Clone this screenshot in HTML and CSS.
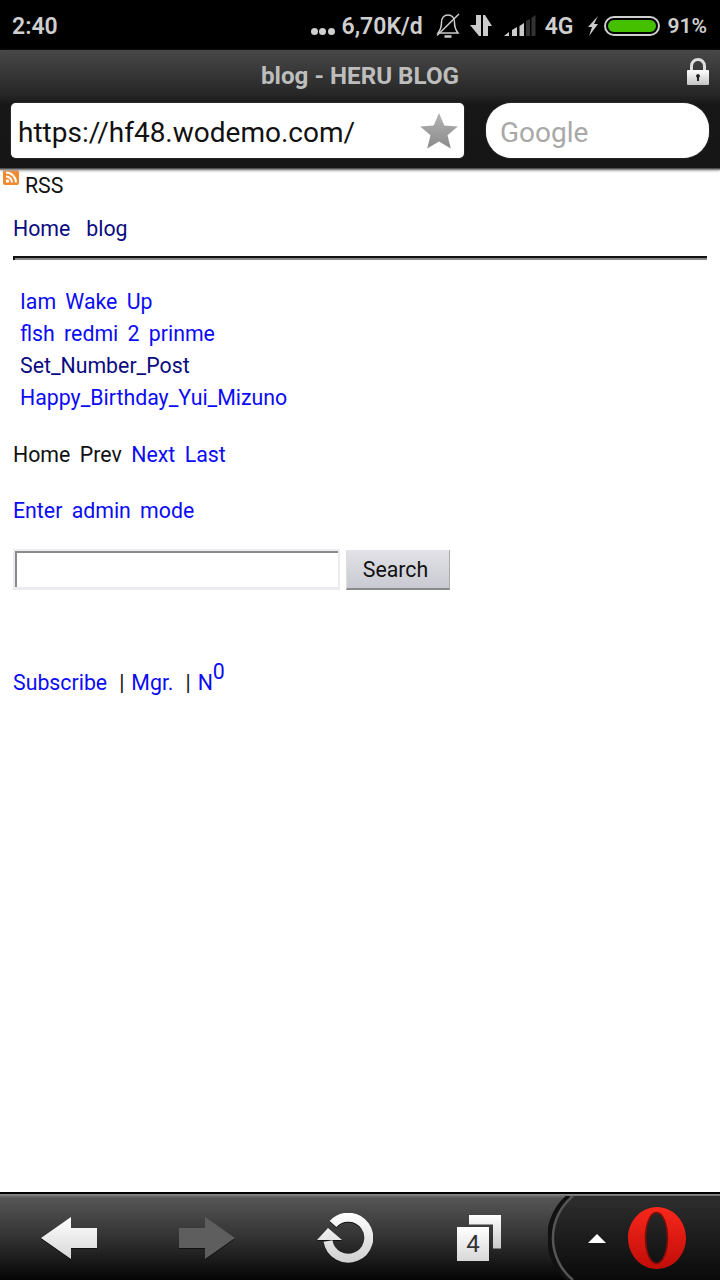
FILE: index.html
```html
<!DOCTYPE html>
<html lang="en">
<head>
    <meta charset="UTF-8">
    <meta name="viewport" content="width=device-width, initial-scale=1.0">
    <title>blog - HERU BLOG</title>
    <link rel="stylesheet" href="styles.css">
</head>
<body>
    <div class="screen">
        <!-- status bar -->
        <div class="status-bar">
            <span class="clock">2:40</span>
            <div class="status-right">
                <span class="dots">
                    <i></i><i></i><i></i>
                </span>
                <span class="speed">6,70K/d</span>
                <svg class="icon-bell" width="24" height="26" viewBox="0 0 24 26">
                    <path d="M12 2C8 2 5.500 5 5.500 9.500c0 5-1.500 8-3.500 10.500h20c-2-2.500-3.500-5.500-3.500-10.500C18.500 5 16 2 12 2z" fill="none" stroke="#ccc" stroke-width="1.500"/>
                    <path d="M8.500 23.500h7" stroke="#ccc" stroke-width="2.500"/>
                    <path d="M1 22.500L23 1" stroke="#ccc" stroke-width="1.500"/>
                </svg>
                <svg class="icon-data" width="23" height="22" viewBox="0 0 23 22">
                    <path d="M6 0h5v21H9L0 10h6z" fill="#ccc"/>
                    <path d="M13 21V0h2l7 11h-4v10z" fill="#ccc"/>
                </svg>
                <svg class="icon-signal" width="32" height="22" viewBox="0 0 32 22">
                    <path d="M0 21l5-4v4z" fill="#ccc"/>
                    <path d="M8 21v-6l5-3v9z" fill="#ccc"/>
                    <path d="M15.500 21V11l4.500-3v13z" fill="#ccc"/>
                    <path d="M22 21V6l4-2v17z" fill="#333"/>
                    <path d="M27.500 21V3l4-3v21z" fill="#333"/>
                </svg>
                <span class="net">4G</span>
                <svg class="icon-bolt" width="12" height="20" viewBox="0 0 12 20">
                    <path d="M11 0L1 11h4l-3 9 9-12H7z" fill="#ccc"/>
                </svg>
                <div class="battery"><div class="battery-fill"></div></div>
                <span class="percent">91%</span>
            </div>
        </div>

        <!-- browser chrome -->
        <div class="browser-top">
            <div class="title-row">
                <span class="page-title">blog - HERU BLOG</span>
                <svg class="icon-lock" width="24" height="28" viewBox="0 0 24 28">
                    <defs>
                        <linearGradient id="lockBody" x1="0" y1="0" x2="0" y2="1">
                            <stop offset="0" stop-color="#fff"/>
                            <stop offset="1" stop-color="#c4c4c4"/>
                        </linearGradient>
                    </defs>
                    <path d="M5.500 13V8a6.500 6.500 0 0 1 13 0v5" fill="none" stroke="#ddd" stroke-width="3"/>
                    <rect x="1" y="12" width="22" height="15" rx="1" fill="url(#lockBody)"/>
                    <path d="M12 16a2 2 0 0 1 1 3.700V23h-2v-3.300A2 2 0 0 1 12 16z" fill="#222"/>
                </svg>
            </div>
            <div class="address-row">
                <div class="url-box">
                    <span class="url-text">https://hf48.wodemo.com/</span>
                    <svg class="icon-star" width="38" height="38" viewBox="0 0 38 38">
                        <defs>
                            <linearGradient id="starFill" x1="0" y1="0" x2="0" y2="1">
                                <stop offset="0" stop-color="#b4b4b4"/>
                                <stop offset="1" stop-color="#8a8a8a"/>
                            </linearGradient>
                        </defs>
                        <path d="M19 1l5.300 12.500 13.500 1-10.300 8.800 3.300 13.200L19 29.400 7.200 36.500l3.300-13.200L.2 14.500l13.500-1z" fill="url(#starFill)"/>
                    </svg>
                </div>
                <div class="search-box">Google</div>
            </div>
        </div>

        <!-- page -->
        <div class="page">
            <div class="rss-row">
                <svg class="icon-rss" width="16" height="16" viewBox="0 0 16 16">
                    <rect width="16" height="15" rx="2" fill="#f08a2c"/>
                    <circle cx="4.500" cy="11" r="1.800" fill="#fff"/>
                    <path d="M3 6.500a6 6 0 0 1 6 6M3 2.500a10 10 0 0 1 10 10" fill="none" stroke="#fff" stroke-width="2"/>
                </svg>
                <span>RSS</span>
            </div>
            <div class="nav">
                <a href="#" class="dark-link">Home</a>
                <a href="#" class="dark-link">blog</a>
            </div>
            <hr class="rule">
            <ul class="posts">
                <li><a href="#">Iam Wake Up</a></li>
                <li><a href="#">flsh redmi 2 prinme</a></li>
                <li><a href="#" class="dark-link">Set_Number_Post</a></li>
                <li><a href="#">Happy_Birthday_Yui_Mizuno</a></li>
            </ul>
            <div class="pager">
                <span>Home</span>
                <span>Prev</span>
                <a href="#">Next</a>
                <a href="#">Last</a>
            </div>
            <div class="admin"><a href="#">Enter admin mode</a></div>
            <form class="search-form">
                <input type="text" class="search-input">
                <button type="button" class="search-btn">Search</button>
            </form>
            <div class="foot">
                <a href="#">Subscribe</a>
                <span class="sep">|</span>
                <a href="#">Mgr.</a>
                <span class="sep">|</span>
                <a href="#">N<sup>0</sup></a>
            </div>
        </div>

        <!-- bottom toolbar -->
        <div class="toolbar">
            <div class="tools">
                <svg class="tool" width="56" height="42" viewBox="0 0 56 42">
                    <defs>
                        <linearGradient id="white" gradientUnits="userSpaceOnUse" x1="0" y1="0" x2="0" y2="50">
                            <stop offset="0" stop-color="#fff"/>
                            <stop offset="1" stop-color="#cfcfcf"/>
                        </linearGradient>
                    </defs>
                    <path d="M0 21L30 0v11h26v20H30v11z" fill="url(#white)"/>
                </svg>
                <svg class="tool" width="56" height="42" viewBox="0 0 56 42">
                    <path d="M56 21L26 0v11H0v20h26v11z" fill="#5e5e5e"/>
                </svg>
                <svg class="tool" width="56" height="50" viewBox="0 0 56 50">
                    <path d="M16 11A20.500 20.500 0 1 1 11 28" fill="none" stroke="url(#white)" stroke-width="9"/>
                    <path d="M0 27L11 15l14 12z" fill="url(#white)"/>
                </svg>
                <div class="tabs">
                    <div class="tab-back"></div>
                    <div class="tab-front">4</div>
                </div>
            </div>
            <div class="menu-area">
                <svg class="menu-arc" width="172" height="84" viewBox="0 0 172 84">
                    <defs>
                        <linearGradient id="arcFill" x1="0" y1="0" x2="0" y2="1">
                            <stop offset="0" stop-color="#2e2e2e"/>
                            <stop offset="1" stop-color="#0a0a0a"/>
                        </linearGradient>
                    </defs>
                    <path d="M23 0A54 54 0 0 0 23 84H172V0z" fill="url(#arcFill)"/>
                    <path d="M21.500 0A54 54 0 0 0 21.500 84" fill="none" stroke="#111" stroke-width="5"/>
                    <path d="M25 0A54 54 0 0 0 25 84" fill="none" stroke="#555" stroke-width="2.500"/>
                </svg>
                <div class="arrow-up"></div>
                <svg class="opera" width="58" height="62" viewBox="0 0 58 62">
                    <defs>
                        <linearGradient id="operaRed" x1="0" y1="0" x2="0" y2="1">
                            <stop offset="0" stop-color="#f8281c"/>
                            <stop offset="1" stop-color="#c00c08"/>
                        </linearGradient>
                    </defs>
                    <path fill-rule="evenodd" d="M29 0C13 0 0 14 0 31s13 31 29 31 29-14 29-31S45 0 29 0zm-.500 6c-6 0-10.500 11-10.500 25s4.500 25 10.500 25S39 45 39 31 34.500 6 28.500 6z" fill="url(#operaRed)"/>
                    <ellipse cx="28.500" cy="31" rx="11" ry="25.500" fill="none" stroke="#7c0c08" stroke-width="1.500"/>
                </svg>
            </div>
        </div>
    </div>
</body>
</html>
```

FILE: styles.css
```css
* {
    margin: 0;
    padding: 0;
    box-sizing: border-box;
}

body {
    font-family: Roboto, sans-serif;
    background-color: #ffffff;
}

.screen {
    width: 720px;
    height: 1280px;
    display: flex;
    flex-direction: column;
    overflow: hidden;
}

/* status bar */
.status-bar {
    height: 50px;
    background-color: #000000;
    color: #cfcfcf;
    font-size: 23px;
    font-weight: 600;
    display: flex;
    justify-content: space-between;
    align-items: center;
    padding: 2px 13px 0 12px;
}

.status-right {
    display: flex;
    align-items: center;
}

.dots {
    display: flex;
    gap: 1.500px;
    margin-top: 10px;
    margin-right: 7px;
}

.dots i {
    width: 7px;
    height: 7px;
    border-radius: 50%;
    background-color: #cfcfcf;
}

.icon-bell {
    margin-left: 13px;
}

.icon-data {
    margin-left: 10px;
}

.icon-signal {
    margin-left: 11px;
}

.net {
    margin-left: 9px;
}

.icon-bolt {
    margin-left: 13px;
}

.battery {
    width: 56px;
    height: 20px;
    margin-left: 5px;
    border: 2px solid #cfcfcf;
    border-radius: 10px;
    padding: 2px;
}

.battery-fill {
    width: 100%;
    height: 100%;
    background-color: #45c000;
    border-radius: 6px;
}

.percent {
    margin-left: 8px;
    font-size: 21px;
}

/* browser top */
.browser-top {
    height: 120px;
    background: linear-gradient(#484848 0, #262626 45px, #171717 55px, #161616 118px, #8a8a8a 119px);
    box-shadow: 0 1px 2px #aaaaaa;
    padding: 0 11px;
    position: relative;
    z-index: 1;
}

.title-row {
    height: 53px;
    padding-bottom: 2px;
    display: flex;
    justify-content: center;
    align-items: center;
    position: relative;
}

.page-title {
    color: #bdbdbd;
    font-size: 24.200px;
    font-weight: 700;
}

.icon-lock {
    position: absolute;
    right: -1px;
    top: 8px;
}

.address-row {
    display: flex;
    justify-content: space-between;
}

.url-box {
    width: 453px;
    height: 55px;
    background-color: #ffffff;
    border-radius: 5px;
    box-shadow: 0 0 1px #bbbbbb;
    display: flex;
    justify-content: space-between;
    align-items: center;
    padding: 0 6px 0 7px;
    color: #111111;
    font-size: 28px;
}

.url-text {
    margin-top: 3px;
}

.search-box {
    width: 223px;
    height: 55px;
    background-color: #ffffff;
    border-radius: 26px;
    box-shadow: 0 0 1px #bbbbbb;
    color: #a8a8a8;
    font-size: 28px;
    line-height: 60px;
    padding-left: 14px;
}

/* page */
.page {
    flex: 1;
    color: #111111;
    font-size: 21.300px;
    word-spacing: 4px;
    line-height: 32px;
    padding: 0 13px;
}

.page a {
    color: #0b0bf5;
    text-decoration: none;
}

.page a.dark-link {
    color: #0a0a80;
}

.rss-row {
    height: 31px;
    margin-left: -10px;
    display: flex;
    align-items: flex-start;
    gap: 6px;
    line-height: 31px;
}

.nav {
    display: flex;
    gap: 16px;
    margin-top: 12px;
}

.rule {
    height: 4px;
    margin-top: 11px;
    border: none;
    border-top: 2px solid #111111;
    border-left: 2px solid #111111;
    background-color: #888888;
}

.posts {
    list-style: none;
    margin-top: 26px;
    padding-left: 7px;
}

.pager {
    display: flex;
    gap: 9.500px;
    margin-top: 25px;
}

.admin {
    margin-top: 24px;
}

.search-form {
    display: flex;
    gap: 6px;
    margin-top: 22px;
}

.search-input {
    width: 327px;
    height: 41px;
    background-color: #ffffff;
    border: 2px solid #ececf0;
    border-bottom-width: 3px;
    box-shadow: inset 2px 2px 0 #8a8a8a;
}

.search-btn {
    width: 104px;
    height: 40px;
    margin-top: 1px;
    padding-right: 5px;
    background: linear-gradient(#e2e2e8, #c9c9d1);
    border: none;
    border-bottom: 2px solid #8a8a8a;
    border-left: 1px solid #dddddd;
    border-right: 1px solid #aaaaaa;
    color: #111111;
    font-family: Roboto, sans-serif;
    font-size: 21.300px;
}

.foot {
    display: flex;
    align-items: baseline;
    margin-top: 77px;
}

.sep {
    margin-left: 12px;
    margin-right: 7px;
}

.foot sup {
    font-size: 21.300px;
    line-height: 0;
    vertical-align: 11px;
}

/* bottom toolbar */
.toolbar {
    height: 88px;
    background: linear-gradient(#000000 0, #000000 2px, #8a8a8a 2px, #707070 4px, #555555 6px, #333333 45px, #050505 88px);
    display: flex;
    justify-content: space-between;
}

.tools {
    display: flex;
    align-items: center;
    padding-top: 3px;
}

.tool {
    display: block;
    margin-left: 82px;
    filter: drop-shadow(0 1px 0 #111111);
}

.tool:first-child {
    margin-left: 41px;
}

.tabs {
    width: 44px;
    height: 46px;
    margin-left: 84px;
    position: relative;
}

.tab-back {
    position: absolute;
    top: 0;
    right: 0;
    width: 32px;
    height: 34px;
    background: linear-gradient(#ffffff, #c8c8c8);
    clip-path: polygon(0 0, 100% 0, 100% 100%, 24px 100%, 24px 10px, 0 10px);
}

.tab-front {
    position: absolute;
    left: 0;
    bottom: 0;
    width: 32px;
    height: 34px;
    background: linear-gradient(#ffffff, #d8d8d8);
    color: #333333;
    font-size: 24px;
    line-height: 35px;
    text-align: center;
}

.menu-area {
    width: 172px;
    height: 84px;
    margin-top: 4px;
    display: flex;
    align-items: center;
    padding-left: 40px;
    position: relative;
}

.menu-arc {
    position: absolute;
    top: 0;
    left: 0;
}

.arrow-up {
    width: 0;
    height: 0;
    border-left: 9px solid transparent;
    border-right: 9px solid transparent;
    border-bottom: 9px solid #ffffff;
    margin-right: 22px;
    position: relative;
}

.opera {
    display: block;
    position: relative;
}
```
